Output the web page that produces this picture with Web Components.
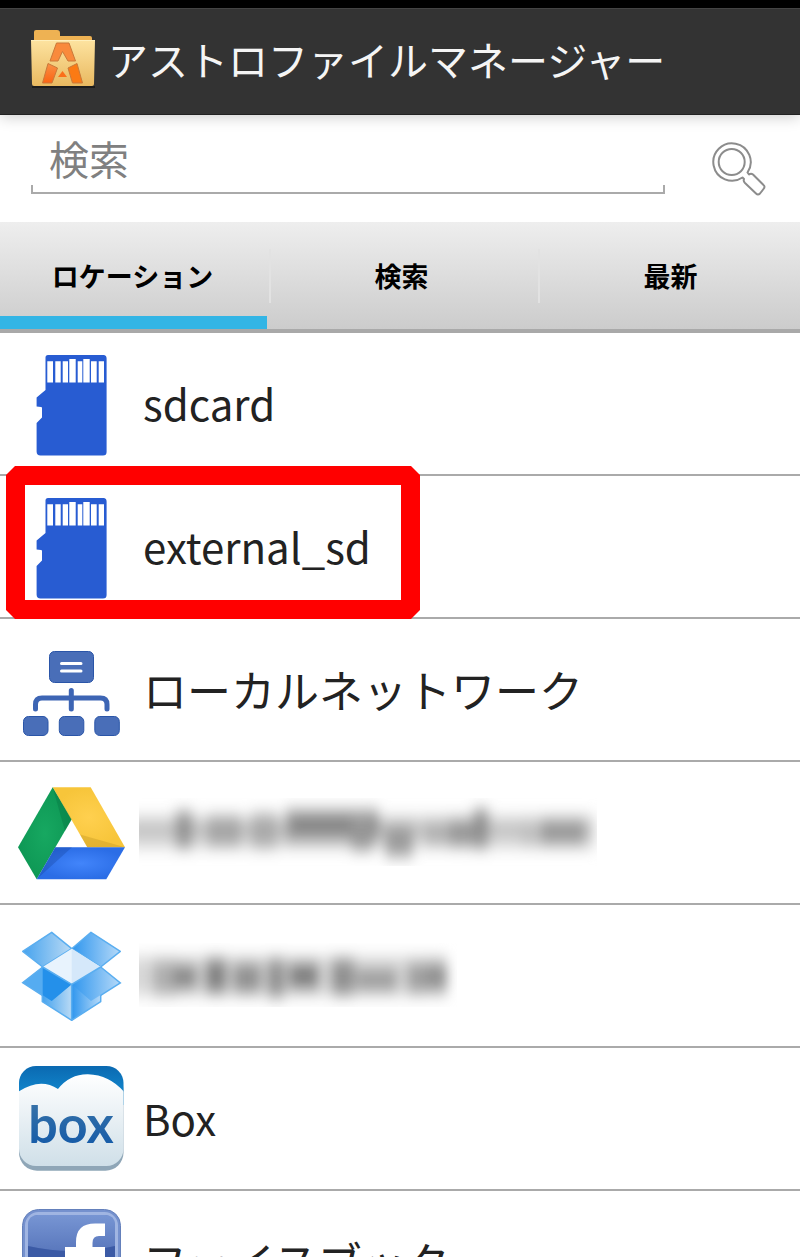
<!DOCTYPE html>
<html lang="ja">
<head>
<meta charset="utf-8">
<meta name="viewport" content="width=device-width, initial-scale=1">
<title>アストロファイルマネージャー</title>
<style>
    body {
        margin: 0;
        font-family: "Noto Sans CJK JP", sans-serif;
        color: #222222;
        background: #ffffff;
    }
</style>
</head>
<body>
<file-manager>
    <app-header slot="header">アストロファイルマネージャー</app-header>
    <search-bar slot="search" placeholder="検索"></search-bar>
    <tab-bar slot="tabs">
        <tab-item selected>ロケーション</tab-item>
        <tab-item>検索</tab-item>
        <tab-item>最新</tab-item>
    </tab-bar>
    <location-row icon="sd" latin>sdcard</location-row>
    <location-row icon="sd" latin highlight>external_sd</location-row>
    <location-row icon="network">ローカルネットワーク</location-row>
    <location-row icon="drive"><masked-label kind="mail"></masked-label></location-row>
    <location-row icon="dropbox"><masked-label kind="name"></masked-label></location-row>
    <location-row icon="box" latin>Box</location-row>
    <location-row icon="facebook">フェイスブック</location-row>
</file-manager>

<template id="template-manager">
    <slot name="header"></slot>
    <slot name="search"></slot>
    <slot name="tabs"></slot>
    <main><slot></slot></main>
    <style>
        :host {
            display: flex;
            flex-direction: column;
            height: 100vh;
            overflow: hidden;
        }
        main {
            flex: 1;
            min-height: 0;
            overflow-y: auto;
            scrollbar-width: none;
        }
    </style>
</template>

<template id="template-header">
    <header>
        <svg width="66" height="62" viewBox="0 0 66 62" aria-hidden="true">
            <defs>
                <linearGradient id="front" x1="0" y1="0" x2="0" y2="1">
                    <stop offset="0" stop-color="#fde3a0"/>
                    <stop offset="1" stop-color="#e9b960"/>
                </linearGradient>
                <linearGradient id="letter" x1="0" y1="0" x2="0" y2="1">
                    <stop offset="0" stop-color="#f98f45"/>
                    <stop offset="1" stop-color="#fb6412"/>
                </linearGradient>
            </defs>
            <path d="M2 59H65" stroke="#1c1c1c" stroke-width="2"/>
            <path d="M4 16V4q0-2 2-2H27q3 0 3 3v3H60q2 0 2 2v6z" fill="#eeb253"/>
            <path d="M1 12H65L64 56q0 2-2 2H4q-2 0-2-2z" fill="url(#front)"/>
            <path d="M1 12.500H65" stroke="#fff0bd"/>
            <g stroke="#c9793a" stroke-width="1">
                <path d="M26.500 15H39L45.500 33H38L32.500 23.500L28 33H20z" fill="#f98a3c"/>
                <path d="M18 35.500L27.500 40L22 55H12.500z" fill="url(#letter)"/>
                <path d="M47 35.500L38 40L42.500 55H52.500z" fill="#fb7a14"/>
                <path d="M32.500 43L37 49H28z" fill="#fb6f1a" stroke="none"/>
            </g>
        </svg>
        <h1><slot></slot></h1>
    </header>
    <style>
        :host {
            display: flow-root;
            position: relative;
            z-index: 1;
            background: #000000;
        }
        header {
            display: flex;
            align-items: center;
            gap: 12px;
            height: 107px;
            box-sizing: border-box;
            margin-top: 8px;
            padding: 0 30px 6px;
            border-top: 1px solid #444444;
            border-bottom: 1px solid #222222;
            background: #333333;
            box-shadow: 0 2px 14px rgba(0, 0, 0, 0.2);
            color: #f5f5f5;
        }
        svg {
            flex: none;
        }
        h1 {
            margin: 0;
            font-size: 40px;
            font-weight: 400;
            line-height: 60px;
            white-space: nowrap;
        }
    </style>
</template>

<template id="template-search">
    <form role="search">
        <div class="field"><input type="text"></div>
        <button type="button" aria-label="検索">
            <svg width="54" height="54" viewBox="0 0 54 54" fill="none" stroke="#8c8c8c" stroke-width="2" stroke-linejoin="round">
                <path d="M35.500 30.500A18.700 18.700 0 1 0 30.500 35.500L32 37Q31 39 33 41L44 51.500Q46 53.500 48 51.500L51.500 47Q53.500 44.500 51.500 43L41 32.500Q39 31 37 32.500z"/>
                <circle cx="19.700" cy="20" r="13"/>
            </svg>
        </button>
    </form>
    <style>
        :host {
            display: block;
        }
        form {
            display: flex;
            align-items: flex-start;
            gap: 47px;
            height: 107px;
            box-sizing: border-box;
            padding: 14px 34px 0 31px;
        }
        .field {
            flex: 1;
            min-width: 0;
            border-bottom: 2px solid #aaaaaa;
            background:
                linear-gradient(#aaaaaa, #aaaaaa) left bottom / 2px 7px no-repeat,
                linear-gradient(#aaaaaa, #aaaaaa) right bottom / 2px 7px no-repeat;
        }
        input {
            display: block;
            width: 100%;
            height: 63px;
            box-sizing: border-box;
            padding: 0 18px 6px;
            border: 0;
            outline: 0;
            background: none;
            color: #222222;
            font: inherit;
            font-size: 40px;
        }
        input::placeholder {
            color: #808080;
            opacity: 1;
        }
        button {
            padding: 0;
            margin-top: 13px;
            border: 0;
            background: none;
            cursor: pointer;
        }
        svg {
            display: block;
        }
    </style>
</template>

<template id="template-tabs">
    <nav role="tablist"><slot></slot></nav>
    <style>
        :host {
            display: block;
            overflow: hidden;
            flex: none;
            border-bottom: 4px solid #a9a9a9;
            background: linear-gradient(#eeeeee, #cccccc);
        }
        nav {
            display: grid;
            grid-template-columns: repeat(3, 1fr);
            gap: 2px;
            /* the last tab runs under the window's edge */
            margin-right: -5px;
        }
    </style>
</template>

<template id="template-tab">
    <button role="tab"><slot></slot></button>
    <style>
        :host {
            display: block;
            height: 107px;
            background: linear-gradient(#e2e2e2, #e2e2e2) left center / 2px 54px no-repeat;
        }
        :host(:first-child) {
            background: none;
        }
        button {
            width: 100%;
            height: 100%;
            padding: 12px 2px 0 0;
            border: 0;
            border-bottom: 13px solid transparent;
            background: none;
            color: #000000;
            font: inherit;
            font-size: 27px;
            font-weight: 700;
            cursor: pointer;
        }
        :host([selected]) button {
            border-bottom-color: #33b5e5;
        }
    </style>
</template>

<template id="template-row">
    <a href="#">
        <span class="icon"></span>
        <span class="label"><slot></slot></span>
    </a>
    <style>
        :host {
            display: block;
            position: relative;
            border-bottom: 2px solid #aaaaaa;
        }
        a {
            display: flex;
            align-items: center;
            gap: 18px;
            height: 141px;
            padding: 0 18px;
            color: inherit;
            text-decoration: none;
        }
        .icon {
            flex: none;
        }
        .icon svg {
            display: block;
        }
        .label {
            padding-bottom: 2px;
            font-size: 44px;
            line-height: 64px;
            white-space: nowrap;
        }
        :host([latin]) .label {
            font-size: 42px;
        }
        :host([highlight]) {
            z-index: 1;
        }
        :host([highlight])::after {
            content: "";
            position: absolute;
            left: 6px;
            top: -10px;
            width: 414px;
            height: 153px;
            box-sizing: border-box;
            border: 19px solid #ff0000;
            clip-path: polygon(9px 0, calc(100% - 9px) 0, 100% 9px, 100% calc(100% - 9px), calc(100% - 9px) 100%, 9px 100%, 0 calc(100% - 9px), 0 9px);
            pointer-events: none;
        }
    </style>
</template>

<template id="template-masked">
    <svg role="img" aria-label="非表示"></svg>
    <style>
        :host {
            display: block;
            margin-left: -4px;
        }
        svg {
            display: block;
            overflow: hidden;
        }
    </style>
</template>

<script>
    const ICONS = {
        sd: `
            <path fill="#285cd2" d="M30 5H85.500Q88.600 5 88.600 8.500V102Q88.600 105.500 85 105.500H22.500Q18.600 105.500 18.600 101.500V73L24 67.500V58Q24 57 23 57L18.600 56.500V47.500L27.500 40V7.500Q27.500 5 30 5z"/>
            <path fill="#ffffff" d="M29.300 11.300H35V32.600H29.300zM37.300 11.300H42.700V32.600H37.300zM44.700 11.300H50V32.600H44.700zM51.300 9H57.700V32.600H51.300zM59.700 11.300H64.300V32.600H59.700zM65.300 9H71.700V32.600H65.300zM73 11.300H78.700V32.600H73zM80.700 11.300H86V32.600H80.700z"/>`,
        network: `
            <g fill="#496eb8" stroke="#2a55a8" stroke-width="1">
                <rect x="31.500" y="15.500" width="44" height="31" rx="5"/>
                <rect x="5.500" y="80.500" width="24.500" height="19" rx="5"/>
                <rect x="41.300" y="80.500" width="24.500" height="19" rx="5"/>
                <rect x="76.800" y="80.500" width="24.500" height="19" rx="5"/>
            </g>
            <path d="M43.500 27.500H63M43.500 35H63" stroke="#ffffff" stroke-width="3" stroke-linecap="round"/>
            <path d="M17.500 73V68.500Q17.500 62 24 62H82.500Q89 62 89 68.500V73M53.300 54.500V73" fill="none" stroke="#3d65b4" stroke-width="5" stroke-linecap="round"/>`,
        drive: `
            <defs>
                <radialGradient id="g"><stop offset="0" stop-color="#17a861"/><stop offset="1" stop-color="#0e9855"/></radialGradient>
                <radialGradient id="y"><stop offset="0" stop-color="#ffd04f"/><stop offset="1" stop-color="#f7c53a"/></radialGradient>
                <radialGradient id="b"><stop offset="0" stop-color="#4285fb"/><stop offset="1" stop-color="#2b6de6"/></radialGradient>
            </defs>
            <path fill="url(#g)" d="M34.700 8.300L53.700 40.300L18.700 100.300L0 68.300z"/>
            <path fill="url(#y)" d="M34.700 8.300H72.700L107 68.300H69.300z"/>
            <path fill="url(#b)" d="M37.300 68.300H107L88.300 100.300H18.700z"/>
            <path fill="#06703f" opacity=".35" d="M34.700 8.300L53.700 40.300L47 52z"/>
            <path fill="#a57b14" opacity=".25" d="M62 55.500L107 68.300H69.300z"/>
            <path fill="#153e96" opacity=".3" d="M37.300 68.300H54L18.700 100.300z"/>`,
        dropbox: `
            <defs>
                <linearGradient id="l"><stop offset="0" stop-color="#46a3ee"/><stop offset="1" stop-color="#b9daf5"/></linearGradient>
                <linearGradient id="r"><stop offset="0" stop-color="#2f96ee"/><stop offset="1" stop-color="#b5d9f8"/></linearGradient>
            </defs>
            <g stroke="#5aaef0" stroke-width="1.500" stroke-linejoin="round">
                <path fill="url(#l)" d="M24.300 45L53.700 62.300V98.300L24.300 79.700z"/>
                <path fill="url(#r)" d="M82.700 45L53.700 62.300V98.300L82.700 79.700z"/>
                <path fill="url(#l)" d="M33.700 10.300L53.700 26.700L24.700 45L4.700 29.300z"/>
                <path fill="url(#r)" d="M73 10.300L102.300 29.300L82.700 45L53.700 26.700z"/>
            </g>
            <path fill="#e8f3fd" d="M53.700 26.700L82.700 45L53.700 62.300L24.700 45z"/>
            <path fill="#d5e8fa" d="M53.700 26.700L82.700 45L53.700 62.300z"/>
            <path fill="#55acf1" d="M24.700 45L4.700 60.700L33.700 79L53.700 62.300z"/>
            <path fill="#2490ea" d="M24.700 45V73.300L33.700 79L53.700 62.300z"/>
            <path fill="url(#r)" d="M82.700 45L102.300 61L73 79L53.700 62.300z"/>
            <path fill="none" stroke="#5aaef0" stroke-width="1.500" d="M24.700 45L4.700 60.700L24.300 73.300M82.700 45L102.300 61L82.700 73.300M24.700 45L53.700 62.300L82.700 45"/>`,
        box: `
            <defs>
                <linearGradient id="sky" x1="0" y1="0" x2="0" y2="1"><stop offset="0" stop-color="#0a68b0"/><stop offset="1" stop-color="#1593d8"/></linearGradient>
                <linearGradient id="cloud" x1="0" y1="0" x2="0" y2="1"><stop offset="0" stop-color="#ffffff"/><stop offset="1" stop-color="#cfdfe8"/></linearGradient>
                <linearGradient id="word" x1="0" y1="0" x2="0" y2="1"><stop offset="0" stop-color="#3f77a8"/><stop offset="1" stop-color="#0f57a8"/></linearGradient>
                <clipPath id="tile"><rect x="1" y="1" width="104.500" height="100" rx="17"/></clipPath>
            </defs>
            <rect x="1" y="6" width="104.500" height="99.700" rx="18" fill="#8fa6b7"/>
            <g clip-path="url(#tile)">
                <rect width="107" height="40" fill="url(#sky)"/>
                <path fill="url(#cloud)" d="M0 27Q22 12 40 24Q52 9 70 9.300Q92 10 107 28V102H0z"/>
            </g>
            <text x="53" y="78" text-anchor="middle" font-family="Lato, sans-serif" font-weight="700" font-size="52" fill="url(#word)">box</text>`,
        facebook: `
            <defs>
                <linearGradient id="fb" x1="0" y1="0" x2="0" y2="1"><stop offset="0" stop-color="#7795d3"/><stop offset="1" stop-color="#5a78bd"/></linearGradient>
            </defs>
            <rect x="4.500" y="1.500" width="98" height="101" rx="16" fill="#7591ce" stroke="#6480bb"/>
            <rect x="8.500" y="5.500" width="90" height="93" rx="12" fill="#5573b8" stroke="#a0b5e2" stroke-width="3"/>
            <path fill="url(#fb)" d="M10 38V17Q10 7 20 7H87Q97 7 97 17V38Q54 48 10 38z"/>
            <path fill="#3b5aa5" d="M10 38Q54 48 97 38V85Q97 97 87 97H20Q10 97 10 85z"/>
            <path fill="#ffffff" d="M58 98V54H47V39H58V34Q58 15.500 77 15.500H87V28H81Q74.500 28 74.500 35V39H87V54H74.500V98z"/>`
    };

    // x, y, width, height, grey level of each smudge
    const SMUDGES = {
        mail: {
            width: 458,
            height: 68,
            bars: [
                [-10, 18, 466, 32, 215], [-10, 27, 462, 10, 185], [36, 14, 18, 36, 150],
                [68, 18, 34, 30, 165], [112, 16, 26, 34, 170], [146, 12, 94, 32, 160],
                [152, 20, 88, 14, 125], [212, 18, 22, 34, 150], [246, 26, 28, 32, 155],
                [286, 24, 28, 22, 175], [310, 22, 28, 26, 150], [334, 12, 16, 38, 145],
                [382, 24, 28, 22, 190], [402, 22, 44, 24, 150]
            ]
        },
        name: {
            width: 318,
            height: 64,
            bars: [
                [-10, 14, 318, 38, 215], [14, 18, 24, 34, 175], [34, 22, 24, 24, 135],
                [66, 16, 22, 34, 130], [94, 20, 28, 30, 145], [128, 16, 18, 38, 145],
                [150, 20, 30, 26, 125], [192, 16, 24, 36, 145], [218, 26, 40, 22, 155],
                [268, 20, 18, 30, 160], [286, 20, 22, 28, 145]
            ]
        }
    };

    class Base extends HTMLElement {
        constructor(id) {
            super();
            this.attachShadow({ mode: 'open' });
            this.shadowRoot.appendChild(document.getElementById(id).content.cloneNode(true));
        }
    }

    customElements.define('file-manager', class extends Base {
        constructor() {
            super('template-manager');
        }
    });

    customElements.define('app-header', class extends Base {
        constructor() {
            super('template-header');
        }
    });

    customElements.define('search-bar', class extends Base {
        constructor() {
            super('template-search');
        }
        connectedCallback() {
            const input = this.shadowRoot.querySelector('input');
            input.placeholder = this.getAttribute('placeholder');
            input.setAttribute('aria-label', input.placeholder);
        }
    });

    customElements.define('tab-bar', class extends Base {
        constructor() {
            super('template-tabs');
            this.addEventListener('click', e => {
                const tab = e.target.closest('tab-item');
                if (!tab) return;
                this.querySelectorAll('tab-item').forEach(t => t.toggleAttribute('selected', t === tab));
            });
        }
    });

    customElements.define('tab-item', class extends Base {
        constructor() {
            super('template-tab');
        }
        static get observedAttributes() {
            return ['selected'];
        }
        attributeChangedCallback(name, oldValue, newValue) {
            this.shadowRoot.querySelector('button').setAttribute('aria-selected', newValue !== null);
        }
    });

    customElements.define('location-row', class extends Base {
        constructor() {
            super('template-row');
        }
        connectedCallback() {
            this.shadowRoot.querySelector('.icon').innerHTML =
                `<svg width="107" height="107" viewBox="0 0 107 107" aria-hidden="true">${ICONS[this.getAttribute('icon')]}</svg>`;
        }
    });

    customElements.define('masked-label', class extends Base {
        constructor() {
            super('template-masked');
        }
        connectedCallback() {
            const { width, height, bars } = SMUDGES[this.getAttribute('kind')];
            const svg = this.shadowRoot.querySelector('svg');
            svg.setAttribute('width', width);
            svg.setAttribute('height', height);
            svg.innerHTML = `
                <filter id="smudge" x="-10%" y="-50%" width="120%" height="200%"><feGaussianBlur stdDeviation="6 8"/></filter>
                <g filter="url(#smudge)">${bars.map(([x, y, w, h, c]) =>
                    `<rect x="${x}" y="${y}" width="${w}" height="${h}" fill="rgb(${c},${c},${c})"/>`).join('')}</g>`;
        }
    });
</script>
</body>
</html>
